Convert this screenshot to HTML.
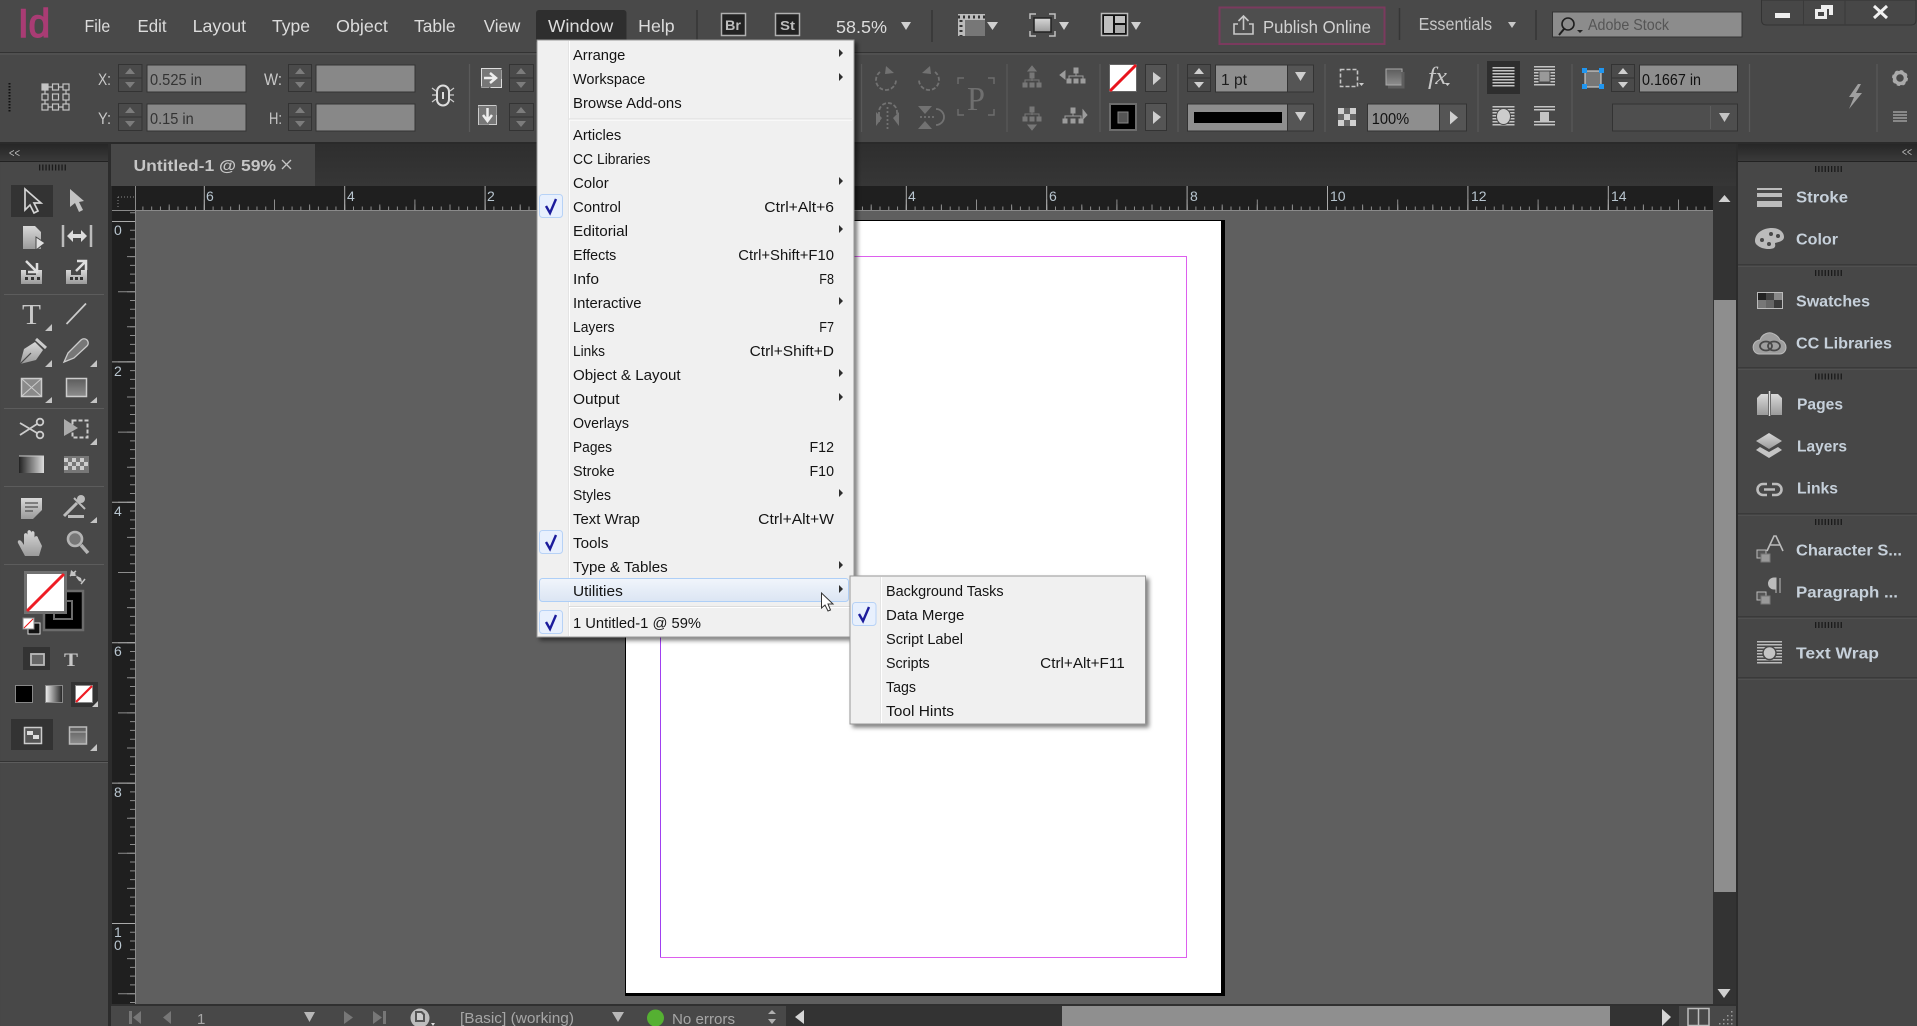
<!DOCTYPE html>
<html><head><meta charset="utf-8"><title>InDesign</title>
<style>
html,body{margin:0;padding:0;background:#474747;overflow:hidden;width:1917px;height:1026px}
svg{display:block;font-family:"Liberation Sans",sans-serif}
.mb{font-size:17.5px;fill:#dcdcdc}
.m{font-size:15px;fill:#141414}
.p{font-size:15.5px;font-weight:bold;fill:#c6d0da}
.r{font-size:14px;fill:#b9c6d0}
.c{font-size:16px;fill:#333}
.l{font-size:17px;fill:#c8c8c8}
.s{font-size:15px;fill:#a6a6a6}
.fly{fill:#c4c4c4}
</style></head><body>
<svg xmlns="http://www.w3.org/2000/svg" width="1917" height="1026" viewBox="0 0 1917 1026">
<defs>
<linearGradient id="gh" x1="0" y1="0" x2="0" y2="1"><stop offset="0" stop-color="#262626"/><stop offset="1" stop-color="#3a3a3a"/></linearGradient>
<linearGradient id="gi" x1="0" y1="0" x2="0" y2="1"><stop offset="0" stop-color="#d8d8d8"/><stop offset="1" stop-color="#9a9a9a"/></linearGradient>
<linearGradient id="gb" x1="0" y1="0" x2="0" y2="1"><stop offset="0" stop-color="#5c5c5c"/><stop offset="1" stop-color="#8e8e8e"/></linearGradient>
<linearGradient id="gg" x1="0" y1="0" x2="1" y2="0"><stop offset="0" stop-color="#f0f0f0"/><stop offset="1" stop-color="#222"/></linearGradient>
<linearGradient id="gk" x1="0" y1="0" x2="1" y2="0"><stop offset="0" stop-color="#222"/><stop offset="1" stop-color="#ddd"/></linearGradient>
<linearGradient id="gu" x1="0" y1="0" x2="0" y2="1"><stop offset="0" stop-color="#f1f5fb"/><stop offset="1" stop-color="#dbe5f3"/></linearGradient>
<linearGradient id="gt" x1="0" y1="0" x2="0" y2="1"><stop offset="0" stop-color="#2e2e2e"/><stop offset="1" stop-color="#363636"/></linearGradient>
<filter id="sh" x="-5%" y="-5%" width="112%" height="112%"><feDropShadow dx="3" dy="3" stdDeviation="2" flood-color="#000" flood-opacity=".5"/></filter>
</defs>

<!-- base -->
<rect width="1917" height="1026" fill="#474747"/>
<rect width="1917" height="52" fill="#494949"/>
<rect y="52" width="1917" height="1" fill="#333"/>
<rect y="53" width="1917" height="2" fill="#505050"/>
<rect y="55" width="1917" height="87" fill="#484848"/>
<rect y="142" width="1917" height="2" fill="#2a2a2a"/>

<!-- tab row / document -->
<rect x="108" y="144" width="1630" height="882" fill="#2c2c2c"/>
<rect x="112" y="144" width="1624" height="42" fill="url(#gt)"/>
<rect x="111" y="144" width="204" height="42" fill="#484848"/>
<text x="133.500" y="171" font-size="15.500" font-weight="bold" fill="#c6c6c6" textLength="142.500" lengthAdjust="spacingAndGlyphs">Untitled-1 @ 59%</text>
<path d="M282 160l9 9M291 160l-9 9" stroke="#c4c4c4" stroke-width="1.300"/>

<!-- pasteboard -->
<rect x="135" y="211" width="1578" height="793" fill="#5f5f5f"/>
<!-- page -->
<rect x="625" y="220" width="600" height="776" fill="#000"/>
<rect x="626" y="221" width="595" height="772" fill="#fff"/>
<path d="M660.500 256.500H1186.500V957.500H660.500" fill="none" stroke="#dd5fee"/>
<path d="M660.500 256.500V957.500" stroke="#a040f0" fill="none"/>

<!-- rulers -->
<rect x="112" y="186" width="1601" height="25" fill="#1f1f1f"/>
<rect x="112" y="211" width="23" height="793" fill="#1f1f1f"/>
<g stroke="#8c8c8c" fill="none">
<path d="M142.400 208.500H1712" stroke-width="4" stroke-dasharray="1 7.775"/>
<path d="M168.700 207.500H1712" stroke-width="6" stroke-dasharray="1 34.100"/>
<path d="M203.800 205H1712" stroke-width="11" stroke-dasharray="1 69.200"/>
<path d="M203.800 198.500H1712" stroke="#aaa" stroke-width="25" stroke-dasharray="1 139.400"/>
<path d="M132.500 212.200V1004" stroke-width="5" stroke-dasharray="1 7.775"/>
<path d="M131 221V1004" stroke-width="8" stroke-dasharray="1 34.100"/>
<path d="M126.500 221V1004" stroke-width="17" stroke-dasharray="1 69.200"/>
<path d="M123.500 221V1004" stroke="#aaa" stroke-width="23" stroke-dasharray="1 139.400"/>
<path d="M112 210.500H1713M135.500 186V1004" stroke="#8a8a8a"/>
<path d="M118 197H134M118 197V209" stroke="#8a8a8a" stroke-dasharray="1 2"/>
</g>
<g class="r">
<text class="r" x="206" y="201">6</text><text class="r" x="347" y="201">4</text><text class="r" x="487" y="201">2</text>
<text class="r" x="908" y="201">4</text><text class="r" x="1049" y="201">6</text><text class="r" x="1190" y="201">8</text>
<text class="r" x="1330" y="201">10</text><text class="r" x="1471" y="201">12</text><text class="r" x="1611" y="201">14</text>
<text class="r" x="114" y="235">0</text><text class="r" x="114" y="376">2</text><text class="r" x="114" y="516">4</text>
<text class="r" x="114" y="656">6</text><text class="r" x="114" y="797">8</text><text class="r" x="114" y="937">1</text><text class="r" x="114" y="950">0</text>
</g>

<!-- vertical scrollbar -->
<rect x="1713" y="186" width="23" height="818" fill="#333"/>
<rect x="1714" y="300" width="22" height="592" fill="#8e8e8e"/>
<path d="M1718.500 202l6-7 6 7zM1717.500 989h13l-6.500 9z" fill="#d0d0d0"/>

<!-- bottom bar -->
<rect x="111" y="1004" width="1625" height="22" fill="#484848"/>
<rect x="111" y="1004" width="1625" height="2" fill="#303030"/>
<rect x="786" y="1006" width="893" height="20" fill="#333"/>
<rect x="1062" y="1006" width="548" height="20" fill="#8f8f8f"/>
<path d="M804 1010v14l-9-7zM1662 1009l9 8-9 9z" fill="#d6d6d6"/>
<g fill="#777">
<path d="M129 1011h3v13h-3zM141 1011v13l-8-6.500zM171 1011v13l-8-6.500zM344 1011l9 6.500-9 6.500zM373 1011l9 6.500-9 6.500zM383 1011h3v13h-3z"/>
</g>
<text class="s" x="197" y="1024" textLength="7">1</text>
<path d="M304 1012h11l-5.500 10zM612 1012h12l-6 10z" fill="#b8b8b8"/>
<circle cx="420" cy="1018" r="9.500" fill="#bdbdbd"/>
<path d="M415 1011h7l3 3v8h-10z" fill="#555"/><path d="M417 1013h4l2 2v5h-6z" fill="#ccc"/>
<path d="M431 1023h4l-2 3z" fill="#ddd"/>
<text class="s" x="460" y="1023" textLength="114" lengthAdjust="spacingAndGlyphs">[Basic] (working)</text>
<circle cx="655.500" cy="1018" r="8.500" fill="#55b032"/>
<text class="s" x="672" y="1024" textLength="63" lengthAdjust="spacingAndGlyphs">No errors</text>
<path d="M768 1014h8l-4-4zM768 1019h8l-4 5z" fill="#b0b0b0"/>
<rect x="1688" y="1008.500" width="21" height="17" fill="none" stroke="#bdbdbd" stroke-width="1.500"/><path d="M1698.500 1008V1026" stroke="#bdbdbd" stroke-width="1.500"/>
<g fill="#999"><rect x="1731" y="1011" width="1.500" height="1.500"/><rect x="1731" y="1015" width="1.500" height="1.500"/><rect x="1731" y="1019" width="1.500" height="1.500"/><rect x="1731" y="1023" width="1.500" height="1.500"/><rect x="1727" y="1015" width="1.500" height="1.500"/><rect x="1727" y="1019" width="1.500" height="1.500"/><rect x="1727" y="1023" width="1.500" height="1.500"/><rect x="1723" y="1019" width="1.500" height="1.500"/><rect x="1723" y="1023" width="1.500" height="1.500"/><rect x="1719" y="1023" width="1.500" height="1.500"/></g>

<!-- menu bar -->
<text x="18" y="37" font-size="40" fill="#a93c74" stroke="#a93c74" stroke-width="1.500" textLength="32" lengthAdjust="spacingAndGlyphs">Id</text>
<text class="mb" x="84.500" y="32" textLength="25.700" lengthAdjust="spacingAndGlyphs">File</text>
<text class="mb" x="137.500" y="32" textLength="29" lengthAdjust="spacingAndGlyphs">Edit</text>
<text class="mb" x="192.600" y="32" textLength="53.500" lengthAdjust="spacingAndGlyphs">Layout</text>
<text class="mb" x="272" y="32" textLength="38" lengthAdjust="spacingAndGlyphs">Type</text>
<text class="mb" x="336" y="32" textLength="51.800" lengthAdjust="spacingAndGlyphs">Object</text>
<text class="mb" x="414" y="32" textLength="41.600" lengthAdjust="spacingAndGlyphs">Table</text>
<text class="mb" x="483.700" y="32" textLength="36.700" lengthAdjust="spacingAndGlyphs">View</text>
<rect x="536" y="10" width="90.500" height="34" rx="3" fill="#2e2e2e"/>
<text class="mb" x="548" y="32" textLength="65.300" lengthAdjust="spacingAndGlyphs">Window</text>
<text class="mb" x="638.200" y="32" textLength="36.500" lengthAdjust="spacingAndGlyphs">Help</text>
<path d="M697 10V42M932 10V42M1399.500 8V40M1536 10V40" stroke="#363636" stroke-width="1.500"/>
<rect x="721.500" y="13.500" width="24" height="22" fill="#222" stroke="#b0b0b0" stroke-width="1.500"/>
<text x="725" y="30" font-size="14" font-weight="bold" fill="#bdbdbd" textLength="16" lengthAdjust="spacingAndGlyphs">Br</text>
<rect x="775.500" y="13.500" width="24" height="22" fill="#222" stroke="#b0b0b0" stroke-width="1.500"/>
<text x="780" y="30" font-size="13" font-weight="bold" fill="#bdbdbd" textLength="15" lengthAdjust="spacingAndGlyphs">St</text>
<text class="mb" x="836" y="33" textLength="51" lengthAdjust="spacingAndGlyphs">58.5%</text>
<path d="M901 22h10l-5 8zM987 22h11l-5.500 8zM1059 22h10l-5 8zM1131 22h10l-5 8z" fill="#d0d0d0"/>
<rect x="958" y="14" width="27" height="22" fill="#bbb"/><rect x="965" y="20" width="20" height="16" fill="#777"/>
<path d="M958 17h27" stroke="#333" stroke-width="3" stroke-dasharray="2 3"/><path d="M961 20v16" stroke="#333" stroke-width="3" stroke-dasharray="2 3"/>
<rect x="1034" y="18" width="17" height="14" fill="url(#gi)" stroke="#222" stroke-width="1.500"/>
<path d="M1030 19v-5h6M1049 14h6v5M1055 31v5h-6M1036 36h-6v-5" fill="none" stroke="#c0c0c0" stroke-width="1.500"/>
<rect x="1101.500" y="13.500" width="26" height="22" fill="#111" stroke="#bbb" stroke-width="1.500"/>
<rect x="1104" y="16" width="9" height="17" fill="#c0c0c0"/><rect x="1115" y="16" width="10" height="7" fill="#c0c0c0"/><rect x="1115" y="25" width="10" height="8" fill="#aaa"/>
<rect x="1219.500" y="7.500" width="165" height="36.500" fill="#4e4e4e" stroke="#7b3a5e" stroke-width="2"/>
<path d="M1238 24h-4v10h19V24h-4M1243.500 30V17M1238.500 21l5-5 5 5" fill="none" stroke="#c8c8c8" stroke-width="1.600"/>
<text class="mb" x="1263" y="33" textLength="108" lengthAdjust="spacingAndGlyphs" style="fill:#d2d2d2">Publish Online</text>
<text class="mb" x="1418.600" y="30" textLength="73.500" lengthAdjust="spacingAndGlyphs" style="fill:#c8c8c8">Essentials</text>
<path d="M1508 22h8l-4 6z" fill="#c8c8c8"/>
<rect x="1552.500" y="12" width="189.500" height="25" fill="#8c8c8c" stroke="#333"/>
<circle cx="1568" cy="24" r="6" fill="none" stroke="#1e1e1e" stroke-width="1.600"/><path d="M1564 29l-5 6" stroke="#1e1e1e" stroke-width="2"/><path d="M1577 30h6l-3 3z" fill="#222"/>
<text x="1588" y="30" font-size="16" fill="#555" textLength="81" lengthAdjust="spacingAndGlyphs">Adobe Stock</text>
<path d="M1761.500 0V20q0 5 5 5H1911q5 0 5-5V0z" fill="#474747" stroke="#333"/>
<path d="M1803.500 0V25M1845 0V25" stroke="#3a3a3a"/>
<rect x="1775" y="13" width="15" height="5" fill="#eee"/>
<path d="M1821 5h12v10h-4v-6h-8z" fill="#eee"/><path d="M1815 9h12v10h-12z" fill="#eee"/><rect x="1818" y="12" width="6" height="4" fill="#474747"/>
<path d="M1874 6l13 12M1887 6l-13 12" stroke="#f0f0f0" stroke-width="3"/>

<!-- control bar -->
<path d="M9.500 83V112" stroke="#111" stroke-width="2" stroke-dasharray="1.500 1.500"/>
<g fill="none" stroke="#c4c4c4" stroke-width="1.200">
<rect x="42" y="84" width="6" height="6" fill="#c4c4c4"/><rect x="52.500" y="84" width="6" height="6"/><rect x="63" y="84" width="6" height="6"/>
<rect x="42" y="94" width="6" height="6"/><rect x="52.500" y="94" width="6" height="6"/><rect x="63" y="94" width="6" height="6"/>
<rect x="42" y="104" width="6" height="6"/><rect x="52.500" y="104" width="6" height="6"/><rect x="63" y="104" width="6" height="6"/>
<path d="M48 87h4.500M58.500 87H63M48 107h4.500M58.500 107H63M45 90v4M45 100v4M66 90v4M66 100v4"/>
</g>
<text class="l" x="98" y="85" textLength="13" lengthAdjust="spacingAndGlyphs">X:</text>
<text class="l" x="98" y="124" textLength="13" lengthAdjust="spacingAndGlyphs">Y:</text>
<text class="l" x="264" y="85" textLength="18" lengthAdjust="spacingAndGlyphs">W:</text>
<text class="l" x="269" y="124" textLength="13" lengthAdjust="spacingAndGlyphs">H:</text>
<g stroke="#333" fill="#4a4a4a">
<rect x="118.500" y="64.500" width="23.500" height="27"/><rect x="118.500" y="103.500" width="23.500" height="27"/>
<rect x="288.500" y="64.500" width="23" height="27"/><rect x="288.500" y="103.500" width="23" height="27"/>
<rect x="509.500" y="64.500" width="24" height="27"/><rect x="509.500" y="103.500" width="24" height="27"/>
<rect x="1187.500" y="64.500" width="23" height="27"/><rect x="1611.500" y="64.500" width="23" height="27"/>
<path d="M118 78h24M118 117h24M288 78h24M288 117h24M509 78h25M509 117h25M1187 78h24M1611 78h24" fill="none"/>
</g>
<path d="M130 68l5 6h-10zM130 88l5-6h-10zM130 107l5 6h-10zM130 127l5-6h-10zM300 68l5 6h-10zM300 88l5-6h-10zM300 107l5 6h-10zM300 127l5-6h-10zM521 68l5 6h-10zM521 88l5-6h-10zM521 107l5 6h-10zM521 127l5-6h-10z" fill="#7c7c7c"/>
<path d="M1199 68l5 6h-10zM1199 88l5-6h-10zM1623 68l5 6h-10zM1623 88l5-6h-10z" fill="#cfcfcf"/>
<g fill="#888" stroke="#333">
<rect x="147" y="65" width="99" height="27"/><rect x="147" y="104" width="99" height="27"/>
<rect x="316" y="65" width="99" height="27"/><rect x="316" y="104" width="99" height="27"/>
</g>
<text class="c" x="150" y="85" textLength="52" lengthAdjust="spacingAndGlyphs">0.525 in</text>
<text class="c" x="150" y="124" textLength="43.700" lengthAdjust="spacingAndGlyphs">0.15 in</text>
<rect x="437" y="85.500" width="12" height="20" rx="6" fill="none" stroke="#ddd" stroke-width="2"/><path d="M443 92v7" stroke="#ddd" stroke-width="2"/>
<path d="M432 88l4 3M432 102l4-3M432 95h4M454 88l-4 3M454 102l-4-3M454 95h-4" stroke="#ccc" stroke-width="1.200"/>
<path d="M469.500 64V132M861.500 64V132M1007 64V132M1100 64V132M1178 64V132M1325 64V132M1478 64V132M1572 64V132M1749.500 64V132M1877 64V132" stroke="#5a5a5a" stroke-width="1.200"/>
<rect x="481.500" y="68.500" width="20" height="19" fill="#777" stroke="#ddd" stroke-dasharray="20 2 1 1 1 1 1 1 1 1"/>
<path d="M484 78h10M490 73l6 5-6 5" fill="none" stroke="#eee" stroke-width="2.500"/>
<rect x="478.500" y="105.500" width="18" height="19" fill="#777" stroke="#ccc" stroke-dasharray="18 1 1 1 1 1 1 1 1 1"/>
<path d="M487.500 108v11M483 115l4.500 6 4.500-6" fill="none" stroke="#eee" stroke-width="2.500"/>
<g fill="none" stroke="#727272" stroke-width="1.800">
<path d="M880 72a10 10 0 1 0 16 8" stroke-dasharray="4 2"/><path d="M935 72a10 10 0 1 1-16 8" stroke-dasharray="4 2"/>
<path d="M879 122v-10a9 9 0 0 1 18 0v2" stroke-dasharray="4 2"/><path d="M887.500 107v22" stroke-dasharray="2 2"/>
<path d="M920 117h16" stroke-dasharray="2 2"/><path d="M936 109a8 8 0 0 1 0 16"/>
</g>
<path d="M886 66l8 7-9 1zM930 66l-8 7 9 1zM876 112l6 6-6 8zM899 112l-6 6 6 8zM918 106h14l-7 8zM918 129h14l-7-8z" fill="#727272"/>
<path d="M958 84v-6h6M988 78h6v6M994 109v6h-6M964 115h-6v-6" fill="none" stroke="#6e6e6e" stroke-width="1.400"/>
<text x="967" y="110" font-family="Liberation Serif" font-size="34" fill="#6f6f6f" textLength="18" lengthAdjust="spacingAndGlyphs">P</text>
<g fill="#777" stroke="#777">
<path d="M1032 66l4 5h-8z"/><rect x="1030" y="73" width="4" height="5"/><rect x="1023" y="83" width="4" height="4"/><rect x="1030" y="83" width="4" height="4"/><rect x="1037" y="83" width="4" height="4"/><path d="M1032 78v3M1025 83v-3h14v3" fill="none"/>
<rect x="1030" y="107" width="4" height="5"/><rect x="1023" y="117" width="4" height="4"/><rect x="1030" y="117" width="4" height="4"/><rect x="1037" y="117" width="4" height="4"/><path d="M1032 112v3M1025 117v-3h14v3" fill="none"/><path d="M1032 130l4-5h-8z"/>
</g>
<g fill="#9c9c9c" stroke="#9c9c9c">
<path d="M1060 75l5-4v8z"/><rect x="1074" y="68" width="4" height="5"/><rect x="1067" y="79" width="4" height="4"/><rect x="1074" y="79" width="4" height="4"/><rect x="1081" y="79" width="4" height="4"/><path d="M1076 73v3M1069 79v-3h14v3" fill="none"/>
<rect x="1071" y="108" width="4" height="5"/><rect x="1063" y="119" width="4" height="4"/><rect x="1071" y="119" width="4" height="4"/><rect x="1079" y="119" width="4" height="4"/><path d="M1073 113v3M1065 119v-3h16v3" fill="none"/><path d="M1087 115l-4-5v9z"/>
</g>
<rect x="1109.500" y="64.500" width="27" height="27" fill="#fff" stroke="#666"/><path d="M1110 91L1136 65" stroke="#e8141c" stroke-width="3"/>
<rect x="1110" y="104" width="26" height="26" fill="#000" stroke="#6c6c6c" stroke-width="2"/><rect x="1118" y="112" width="10" height="11" fill="#555" stroke="#888"/>
<rect x="1145.500" y="64.500" width="21" height="27" fill="#555" stroke="#333"/><rect x="1145.500" y="103.500" width="21" height="27" fill="#555" stroke="#333"/>
<path d="M1153 72l8 6-8 7zM1153 111l8 6-8 7z" fill="#cfcfcf"/>
<rect x="1215.500" y="65" width="72" height="27" fill="#8e8e8e" stroke="#333"/>
<text class="c" x="1221" y="85" textLength="26" lengthAdjust="spacingAndGlyphs" style="fill:#1c1c1c">1 pt</text>
<rect x="1287.500" y="65" width="26" height="27" fill="#555" stroke="#333"/><path d="M1295 72h11l-5.500 9z" fill="#cfcfcf"/>
<rect x="1187.500" y="104" width="100" height="27" fill="#8e8e8e" stroke="#333"/><rect x="1194" y="112" width="88" height="11" fill="#000"/>
<rect x="1287.500" y="104" width="26" height="27" fill="#555" stroke="#333"/><path d="M1295 112h11l-5.500 9z" fill="#cfcfcf"/>
<rect x="1340.500" y="69.500" width="17" height="17" fill="none" stroke="#c4c4c4" stroke-width="1.600" stroke-dasharray="4 2"/><path d="M1359 83h5l-2.500 3z" fill="#ccc"/>
<rect x="1386" y="69" width="16" height="16" fill="url(#gb)" stroke="#aaa"/><path d="M1403 72v15h-15" fill="none" stroke="#5e5e5e" stroke-width="3"/>
<text x="1428" y="84" font-family="Liberation Serif" font-style="italic" font-size="24" fill="#c8c8c8" textLength="19" lengthAdjust="spacingAndGlyphs">fx</text><path d="M1445 83h5l-2.500 3z" fill="#ccc"/>
<rect x="1338" y="108" width="18" height="18" fill="#d0d0d0"/><path d="M1344 108h6v6h-6zM1338 114h6v6h-6zM1350 114h6v6h-6zM1344 120h6v6h-6z" fill="#666"/>
<rect x="1367.500" y="104" width="72" height="27" fill="#8e8e8e" stroke="#333"/>
<text class="c" x="1371.700" y="124" textLength="37.500" lengthAdjust="spacingAndGlyphs" style="fill:#111">100%</text>
<rect x="1439.500" y="104" width="27" height="27" fill="#555" stroke="#333"/><path d="M1450 111l8 6.500-8 7z" fill="#cfcfcf"/>
<rect x="1487" y="61" width="33" height="33" fill="#2e2e2e"/>
<g stroke="#c4c4c4" fill="none">
<path d="M1503.500 67V88" stroke-width="22" stroke-dasharray="1.500 1.500"/>
<path d="M1544.500 66V87" stroke-width="21" stroke-dasharray="1.500 1.500"/>
<path d="M1503.500 106V127" stroke-width="22" stroke-dasharray="1.500 1.500"/>
<path d="M1544.500 106V112M1544.500 121V127" stroke-width="21" stroke-dasharray="1.500 1.500"/>
</g>
<rect x="1539" y="71" width="11" height="11" fill="#999" stroke="#484848"/>
<ellipse cx="1503.500" cy="116.500" rx="7" ry="8" fill="#ccc" stroke="#484848"/>
<rect x="1540" y="112" width="9" height="9" fill="#c4c4c4"/>
<rect x="1585" y="71" width="16" height="16" fill="#777" stroke="#ddd"/>
<g fill="#2096f0"><rect x="1582" y="68" width="5" height="5"/><rect x="1599" y="68" width="5" height="5"/><rect x="1582" y="84" width="5" height="5"/><rect x="1599" y="84" width="5" height="5"/></g>
<rect x="1639.500" y="65" width="98" height="27" fill="#8e8e8e" stroke="#333"/>
<text class="c" x="1642" y="85" textLength="59" lengthAdjust="spacingAndGlyphs" style="fill:#111">0.1667 in</text>
<rect x="1612.500" y="104" width="125" height="27" fill="#4e4e4e" stroke="#333"/><path d="M1710.500 106V129" stroke="#5e5e5e"/><path d="M1719 113h11l-5.500 9z" fill="#c4c4c4"/>
<path d="M1858 84l-9 13h5l-5 12 13-16h-6l5-9z" fill="#a0a0a0"/>
<circle cx="1900" cy="78" r="5.500" fill="none" stroke="#aaa" stroke-width="3.500"/><circle cx="1900" cy="78" r="7" fill="none" stroke="#aaa" stroke-width="2" stroke-dasharray="3 2.500"/>
<path d="M1893 112h14M1893 115h14M1893 118h14M1893 121h14" stroke="#c8c8c8"/>

<!-- left tools -->
<rect x="0" y="144" width="108" height="17" fill="url(#gh)"/>
<text x="9" y="157" font-size="12" fill="#bbb" textLength="11" lengthAdjust="spacingAndGlyphs">&lt;&lt;</text>
<rect x="0" y="161" width="108" height="1" fill="#222"/>
<rect x="1" y="162" width="107" height="864" fill="#484848"/>
<path d="M39 167.500H67" stroke="#1a1a1a" stroke-width="6" stroke-dasharray="1.300 1.900"/>
<path d="M4 294.500H104M4 408.500H104M4 486.500H104M4 564.500H104M0 762.500H108" stroke="#5c5c5c"/>
<path d="M0 761.500H108" stroke="#333"/>
<rect x="11" y="185" width="42" height="32" fill="#333"/>
<path d="M25 189V210L30 205L34 213L38 211L34 203L41 203Z" fill="#3a3a3a" stroke="#d4d4d4" stroke-width="1.700"/>
<path d="M70 189V207L75 203L79 212L83 210L79 202L84 201Z" fill="#c2c2c2"/>
<path d="M23 226H35L41 232V249H23Z" fill="url(#gi)"/><path d="M36 237V250L45 243Z" fill="#e0e0e0" stroke="#484848"/>
<path d="M63 225V247M91 225V247" stroke="#bbb" stroke-width="2.500"/><path d="M67 236l6-6v4h8v-4l6 6-6 6v-4h-8v4z" fill="#ddd"/>
<path d="M21 270h5v5h10v-5h6v14H21z" fill="url(#gi)"/><path d="M25 277h3v3h-3zM31 277h3v3h-3zM37 277h3v3h-3z" fill="#333"/>
<path d="M26 261l10 10M37 263v9h-9" fill="none" stroke="#ddd" stroke-width="2.500"/>
<path d="M66 270h5v5h10v-5h6v14H66z" fill="url(#gi)"/><path d="M70 277h3v3h-3zM75 277h3v3h-3zM80 277h3v3h-3zM70 281h13" fill="#333"/>
<path d="M76 271l10-10M77 261h9v9" fill="none" stroke="#ddd" stroke-width="2.500"/>
<text x="22" y="324" font-family="Liberation Serif" font-size="29" fill="#c8c8c8" textLength="19" lengthAdjust="spacingAndGlyphs">T</text>
<path d="M66.500 324L86 303.500" stroke="#ccc" stroke-width="1.700"/>
<path class="fly" d="M52 324v7h-7zM52 360v7h-7zM97 360v7h-7zM52 397v6h-7zM97 397v6h-7zM97 438v7h-7zM97 517v6h-7zM97 744v7h-7z"/>
<path d="M20 364L24 349L35 342L43 350L36 360Z" fill="url(#gi)"/><path d="M36 339L46 348" stroke="#ccc" stroke-width="3"/><path d="M20 364L31 353" stroke="#484848" stroke-width="1.200"/>
<path d="M64 362L68 353L81 340a3.800 3.800 0 0 1 6 6L74 358Z" fill="#777" stroke="#ccc" stroke-width="1.300"/>
<rect x="21.500" y="378.500" width="20" height="18" fill="#8a8a8a" stroke="#ccc" stroke-width="1.500"/><path d="M22 379l19 17M41 379l-19 17" stroke="#ccc"/>
<rect x="66.500" y="378.500" width="20" height="18" fill="url(#gb)" stroke="#ccc" stroke-width="1.500"/>
<g fill="none" stroke="#ccc" stroke-width="1.800"><circle cx="40" cy="422" r="3.300"/><circle cx="40" cy="435" r="3.300"/><path d="M20 423L37 433M20 435L37 424"/></g>
<rect x="72.500" y="420.500" width="15" height="17" fill="none" stroke="#ccc" stroke-width="2" stroke-dasharray="4 2"/><path d="M64 419V436L78 428Z" fill="#aaa"/>
<rect x="19" y="456" width="25" height="17" fill="url(#gk)"/><path d="M19 456h25" stroke="#ccc"/>
<rect x="64" y="456" width="25" height="17" fill="#777"/><path d="M64 458h4v4h-4zM72 458h4v4h-4zM80 458h4v4h-4zM68 462h4v4h-4zM76 462h4v4h-4zM84 462h4v4h-4zM64 466h4v4h-4zM72 466h4v4h-4zM80 466h4v4h-4z" fill="#ccc"/>
<path d="M21 498H42V510L33 519H21Z" fill="url(#gi)"/><path d="M25 503H38M25 507H38M25 511H33" stroke="#333"/>
<path d="M64 516L77 503" stroke="#bbb" stroke-width="3"/><circle cx="81" cy="499" r="4" fill="#bbb"/><path d="M74 498L85 509" stroke="#bbb" stroke-width="2"/>
<path d="M68 515h16v3H68z" fill="#bbb"/>
<path d="M25 556L18 543C17 540 20 539 22 542L24 545V535c0-2.500 3.500-2.500 3.500 0V532c0-2.500 3.500-2.500 3.500 0V533c0-2.500 3.500-2.500 3.500 0V538c0-2.500 3.500-2.500 3.500 0L42 546 39 556Z" fill="url(#gi)"/>
<circle cx="75" cy="539" r="7" fill="#777" stroke="#b4b4b4" stroke-width="2.600"/><path d="M81 545L88 553" stroke="#b4b4b4" stroke-width="3.600"/>

<path d="M71 570l5 4-1 1 6 3 1 4-3-1-3-4 1-1-7 0" fill="#c4c4c4"/><path d="M70 576l6-5M85 579l-4 5" stroke="#c4c4c4" stroke-width="1.500" fill="none"/>
<rect x="44" y="591" width="39" height="39" fill="#000" stroke="#6c6c6c" stroke-width="2.500"/>
<rect x="54" y="601" width="18" height="18" fill="#000" stroke="#6c6c6c" stroke-width="2"/>
<rect x="25.500" y="572.500" width="40" height="40" fill="#fff" stroke="#717171" stroke-width="3"/><path d="M27 611L64 574" stroke="#ee1c24" stroke-width="3"/>
<rect x="28" y="623" width="12" height="11" fill="#111" stroke="#ddd"/><rect x="23" y="618" width="11" height="11" fill="#fff" stroke="#888"/><path d="M24 628l9-9" stroke="#e11"/>
<rect x="23" y="647" width="27" height="23" fill="#333"/><rect x="31" y="654" width="13" height="11" fill="#666" stroke="#bbb" stroke-width="1.800"/>
<text x="64" y="666" font-family="Liberation Serif" font-weight="bold" font-size="19" fill="#c8c8c8" textLength="14" lengthAdjust="spacingAndGlyphs">T</text>
<rect x="15.500" y="685.500" width="17" height="17" fill="#000" stroke="#888"/>
<rect x="45.500" y="685.500" width="17" height="17" fill="url(#gg)" stroke="#888"/>
<rect x="71" y="682" width="27" height="25" fill="#333"/><rect x="75.500" y="685.500" width="17" height="17" fill="#fff" stroke="#888"/><path d="M76 702L92 686" stroke="#ee1c24" stroke-width="2.200"/>
<path d="M98 701v6h-6z" fill="#ccc"/>
<rect x="11" y="719" width="42" height="31" fill="#333"/>
<rect x="24.500" y="727.500" width="17" height="16" fill="#555" stroke="#ccc" stroke-width="1.500"/><path d="M27 731h6v4h-6zM33 735h6v4h-6z" fill="#ddd"/>
<rect x="69.500" y="727" width="17" height="17" fill="url(#gb)" stroke="#bbb" stroke-width="1.500"/><path d="M69 732h18" stroke="#bbb"/>

<!-- right panel -->
<rect x="1738" y="144" width="179" height="17" fill="url(#gh)"/>
<rect x="1738" y="161" width="179" height="1" fill="#222"/>
<rect x="1738" y="162" width="179" height="864" fill="#474747"/>
<text x="1902" y="156" font-size="12" fill="#bbb" textLength="10" lengthAdjust="spacingAndGlyphs">&lt;&lt;</text>
<path d="M1738 265H1917M1738 368H1917M1738 514H1917M1738 617H1917M1738 678H1917" stroke="#2e2e2e"/>
<path d="M1738 266H1917M1738 369H1917M1738 515H1917M1738 618H1917M1738 679H1917" stroke="#585858"/>
<path d="M1815 169H1843M1815 273H1843M1815 376.500H1843M1815 522H1843M1815 625H1843" stroke="#1a1a1a" stroke-width="6" stroke-dasharray="1.300 1.900"/>
<g transform="translate(0 .5)">
<text class="p" x="1796" y="202" textLength="52" lengthAdjust="spacingAndGlyphs">Stroke</text>
<text class="p" x="1796" y="244" textLength="42" lengthAdjust="spacingAndGlyphs">Color</text>
<text class="p" x="1796" y="306" textLength="74" lengthAdjust="spacingAndGlyphs">Swatches</text>
<text class="p" x="1796" y="348" textLength="96" lengthAdjust="spacingAndGlyphs">CC Libraries</text>
<text class="p" x="1797" y="409" textLength="46" lengthAdjust="spacingAndGlyphs">Pages</text>
<text class="p" x="1797" y="451" textLength="50" lengthAdjust="spacingAndGlyphs">Layers</text>
<text class="p" x="1797" y="493" textLength="41" lengthAdjust="spacingAndGlyphs">Links</text>
<text class="p" x="1796" y="555" textLength="106" lengthAdjust="spacingAndGlyphs">Character S...</text>
<text class="p" x="1796" y="597" textLength="102" lengthAdjust="spacingAndGlyphs">Paragraph ...</text>
<text class="p" x="1796" y="658" textLength="83" lengthAdjust="spacingAndGlyphs">Text Wrap</text>
</g>
<path d="M1757 188h25v2h-25zM1757 193h25v4h-25zM1757 201h25v6h-25z" fill="#bcbcbc"/>
<path d="M1755 241c0-8 8-13 17-13 7 0 12 4 12 9 0 4-5 5-9 6 0 2 1 3-1 5-7 3-19-1-19-7z" fill="#bbb"/>
<circle cx="1762" cy="240" r="2" fill="#484848"/><circle cx="1769" cy="244" r="2" fill="#484848"/><circle cx="1771" cy="234" r="2" fill="#484848"/><circle cx="1778" cy="236" r="2" fill="#484848"/>
<rect x="1757.500" y="292.500" width="25" height="16" fill="#555" stroke="#bbb"/>
<rect x="1758" y="293" width="8" height="7" fill="#222"/><rect x="1766" y="293" width="8" height="7" fill="#444"/><rect x="1774" y="293" width="8" height="7" fill="#888"/>
<rect x="1758" y="300" width="8" height="8" fill="#777"/><rect x="1766" y="300" width="8" height="8" fill="#666"/><rect x="1774" y="300" width="8" height="8" fill="#3a3a3a"/>
<path d="M1759 354c-8-1-8-13 1-14 2-6 9-9 14-6 4 2 5 4 6 6 8 2 8 13 0 14z" fill="#9e9e9e" stroke="#bbb"/>
<ellipse cx="1766" cy="346" rx="6" ry="4.500" fill="none" stroke="#484848" stroke-width="1.800"/><ellipse cx="1774" cy="346" rx="6" ry="4.500" fill="none" stroke="#484848" stroke-width="1.800"/>
<path d="M1757 398l4-4h7v21h-11zM1782 398l-4-4h-7v21h11z" fill="url(#gi)"/><path d="M1769.500 391V416" stroke="#ddd" stroke-width="1.500"/>
<path d="M1769 433l13 8-13 8-13-8z" fill="url(#gi)"/><path d="M1760 447l-4 3 13 8 13-8-4-3-9 5z" fill="#c4c4c4"/>
<path d="M1767 484h-4a5.500 5.500 0 0 0 0 11h4M1772 484h4a5.500 5.500 0 0 1 0 11h-4M1764 489.500h11" fill="none" stroke="#bcbcbc" stroke-width="2.600"/>
<rect x="1757" y="550" width="9" height="8" fill="#555" stroke="#bbb"/><rect x="1761" y="554" width="9" height="8" fill="#999" stroke="#777"/>
<path d="M1767 551l7-15h2l7 15M1770 545h10" fill="none" stroke="#bcbcbc" stroke-width="1.600"/>
<rect x="1757" y="592" width="9" height="8" fill="#555" stroke="#bbb"/><rect x="1761" y="596" width="9" height="8" fill="#999" stroke="#777"/>
<path d="M1776 578h-2a5.500 5.500 0 0 0 0 11h2zM1776 578v15M1780 578v15" fill="#bcbcbc" stroke="#bcbcbc"/>
<path d="M1769.500 641V665" stroke="#bbb" stroke-width="25" stroke-dasharray="1.500 1.500"/>
<circle cx="1769.500" cy="653" r="6.500" fill="#c4c4c4" stroke="#484848" stroke-width="1.500"/>

<!-- main menu -->
<rect x="537" y="40" width="317" height="597" fill="#f0f0f0" stroke="#979797" filter="url(#sh)"/>
<path d="M568.500 41V636" stroke="#e4e4e4"/><path d="M569.500 41V636" stroke="#fff"/>
<path d="M569 119H852M569 606.500H852" stroke="#dcdcdc"/><path d="M569 120H852M569 607.500H852" stroke="#fff"/>
<rect x="539.500" y="578.500" width="309" height="23" rx="3" fill="url(#gu)" stroke="#aecff7"/>
<g fill="#e8f0fd" stroke="#b7d2f6">
<rect x="539.500" y="194.500" width="23" height="23" rx="3"/>
<rect x="539.500" y="530.500" width="23" height="23" rx="3"/>
<rect x="539.500" y="610.500" width="23" height="23" rx="3"/>
</g>
<path d="M546 206L550 213L556 199M546 542L550 549L556 535M546 622L550 629L556 615" fill="none" stroke="#1c1c9c" stroke-width="2.400"/>
<g>
<text class="m" x="573" y="60" textLength="52.300" lengthAdjust="spacingAndGlyphs">Arrange</text>
<text class="m" x="573" y="84" textLength="72.300" lengthAdjust="spacingAndGlyphs">Workspace</text>
<text class="m" x="573" y="108" textLength="108.700" lengthAdjust="spacingAndGlyphs">Browse Add-ons</text>
<text class="m" x="573" y="140" textLength="48.300" lengthAdjust="spacingAndGlyphs">Articles</text>
<text class="m" x="573" y="164" textLength="77.300" lengthAdjust="spacingAndGlyphs">CC Libraries</text>
<text class="m" x="573" y="188" textLength="35.700" lengthAdjust="spacingAndGlyphs">Color</text>
<text class="m" x="573" y="212" textLength="48" lengthAdjust="spacingAndGlyphs">Control</text>
<text class="m" x="573" y="236" textLength="55" lengthAdjust="spacingAndGlyphs">Editorial</text>
<text class="m" x="573" y="260" textLength="43.300" lengthAdjust="spacingAndGlyphs">Effects</text>
<text class="m" x="573" y="284" textLength="26" lengthAdjust="spacingAndGlyphs">Info</text>
<text class="m" x="573" y="308" textLength="68.500" lengthAdjust="spacingAndGlyphs">Interactive</text>
<text class="m" x="573" y="332" textLength="41.600" lengthAdjust="spacingAndGlyphs">Layers</text>
<text class="m" x="573" y="356" textLength="32" lengthAdjust="spacingAndGlyphs">Links</text>
<text class="m" x="573" y="380" textLength="107.600" lengthAdjust="spacingAndGlyphs">Object &amp; Layout</text>
<text class="m" x="573" y="404" textLength="46.500" lengthAdjust="spacingAndGlyphs">Output</text>
<text class="m" x="573" y="428" textLength="56" lengthAdjust="spacingAndGlyphs">Overlays</text>
<text class="m" x="573" y="452" textLength="39" lengthAdjust="spacingAndGlyphs">Pages</text>
<text class="m" x="573" y="476" textLength="41.600" lengthAdjust="spacingAndGlyphs">Stroke</text>
<text class="m" x="573" y="500" textLength="38" lengthAdjust="spacingAndGlyphs">Styles</text>
<text class="m" x="573" y="524" textLength="67" lengthAdjust="spacingAndGlyphs">Text Wrap</text>
<text class="m" x="573" y="548" textLength="35.500" lengthAdjust="spacingAndGlyphs">Tools</text>
<text class="m" x="573" y="572" textLength="94.700" lengthAdjust="spacingAndGlyphs">Type &amp; Tables</text>
<text class="m" x="573" y="596" textLength="49.800" lengthAdjust="spacingAndGlyphs">Utilities</text>
<text class="m" x="573" y="628" textLength="128" lengthAdjust="spacingAndGlyphs">1 Untitled-1 @ 59%</text>
<text class="m" x="764.300" y="212" textLength="69.700" lengthAdjust="spacingAndGlyphs">Ctrl+Alt+6</text>
<text class="m" x="738.300" y="260" textLength="95.700" lengthAdjust="spacingAndGlyphs">Ctrl+Shift+F10</text>
<text class="m" x="819.300" y="284" textLength="14.700" lengthAdjust="spacingAndGlyphs">F8</text>
<text class="m" x="819.300" y="332" textLength="14.700" lengthAdjust="spacingAndGlyphs">F7</text>
<text class="m" x="749.600" y="356" textLength="84.400" lengthAdjust="spacingAndGlyphs">Ctrl+Shift+D</text>
<text class="m" x="809.500" y="452" textLength="24.500" lengthAdjust="spacingAndGlyphs">F12</text>
<text class="m" x="809.500" y="476" textLength="24.500" lengthAdjust="spacingAndGlyphs">F10</text>
<text class="m" x="758.200" y="524" textLength="75.800" lengthAdjust="spacingAndGlyphs">Ctrl+Alt+W</text>
</g>
<path d="M839 49l4 4-4 4zM839 73l4 4-4 4zM839 177l4 4-4 4zM839 225l4 4-4 4zM839 297l4 4-4 4zM839 369l4 4-4 4zM839 393l4 4-4 4zM839 489l4 4-4 4zM839 561l4 4-4 4zM839 585l4 4-4 4z" fill="#2e2e2e"/>
<path d="M821.500 593V608L825 605L828 611L830.500 610L828 604H833Z" fill="#fff" stroke="#333"/>

<!-- sub menu -->
<rect x="850" y="576" width="295.500" height="148" fill="#f0f0f0" stroke="#979797" filter="url(#sh)"/>
<path d="M880.500 577V723" stroke="#e4e4e4"/><path d="M881.500 577V723" stroke="#fff"/>
<rect x="852.500" y="602.500" width="23.500" height="23" rx="3" fill="#e8f0fd" stroke="#b7d2f6"/>
<path d="M859 614L863 621L869 607" fill="none" stroke="#1c1c9c" stroke-width="2.400"/>
<text class="m" x="886" y="596" textLength="117.600" lengthAdjust="spacingAndGlyphs">Background Tasks</text>
<text class="m" x="886" y="620" textLength="78.400" lengthAdjust="spacingAndGlyphs">Data Merge</text>
<text class="m" x="886" y="644" textLength="77" lengthAdjust="spacingAndGlyphs">Script Label</text>
<text class="m" x="886" y="668" textLength="43.700" lengthAdjust="spacingAndGlyphs">Scripts</text>
<text class="m" x="886" y="692" textLength="30" lengthAdjust="spacingAndGlyphs">Tags</text>
<text class="m" x="886" y="716" textLength="68" lengthAdjust="spacingAndGlyphs">Tool Hints</text>
<text class="m" x="1040.200" y="668" textLength="84.500" lengthAdjust="spacingAndGlyphs">Ctrl+Alt+F11</text>
</svg>
</body></html>
